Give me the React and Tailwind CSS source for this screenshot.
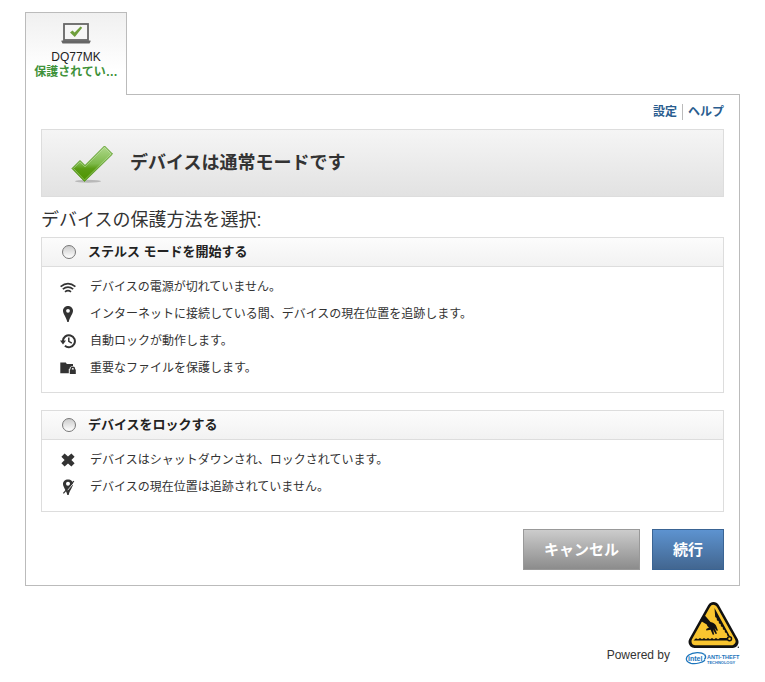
import React from 'react';

function CheckMark({ id }) {
  return (
    <>
      <defs>
        <linearGradient id={id} x1="0" y1="0" x2="0" y2="1">
          <stop offset="0" stopColor="#b0d98c" />
          <stop offset="0.5" stopColor="#7db94a" />
          <stop offset="0.64" stopColor="#5a9c14" />
          <stop offset="1" stopColor="#4c9400" />
        </linearGradient>
      </defs>
      <path d="M1 23.5 L9 15.5 L14 20.5 L33.5 1 L41.5 9 L13.5 36.5 Z" fill={`url(#${id})`} stroke="#5f9f2c" strokeWidth="1" />
      <path d="M2.6 23.5 L9 17 L14 22 L33.5 2.5 L40 9 L13.5 35 Z" fill="none" stroke="#d3ebbd" strokeWidth="0.8" opacity="0.5" />
    </>
  );
}

function LaptopIcon() {
  return (
    <svg width="30" height="21" viewBox="0 0 30 21" aria-hidden="true">
      <rect x="3" y="1" width="24" height="16" fill="#f6f6f6" stroke="#666" strokeWidth="1.8" />
      <path d="M0.5 17.5 H29.5 V18.5 L28.5 20.5 H1.5 L0.5 18.5 Z" fill="#666" />
      <path d="M9 9.5 L11.5 7.6 L13.6 9.4 L19.5 3.4 L21.2 4.8 L13.8 14 Z" fill="#6f9f3c" />
    </svg>
  );
}

function WifiIcon() {
  return (
    <svg width="16" height="16" viewBox="0 0 16 16" fill="none" stroke="#333" strokeWidth="1.7" aria-hidden="true">
      <path d="M0.6 7.6 Q8 1.6 15.4 7.6" />
      <path d="M2.8 10.2 Q8 6 13.2 10.2" />
      <path d="M5 12.8 Q8 10.4 11 12.8" />
    </svg>
  );
}

function PinIcon() {
  return (
    <svg width="16" height="16" viewBox="0 0 16 16" fill="#333" aria-hidden="true">
      <path fillRule="evenodd" d="M8 0 C5 0 3 2.2 3 4.8 C3 8 6.4 11.5 7.3 16 H8.7 C9.6 11.5 13 8 13 4.8 C13 2.2 11 0 8 0 Z M8 2.9 A1.9 1.9 0 1 1 8 6.7 A1.9 1.9 0 1 1 8 2.9 Z" />
    </svg>
  );
}

function HistoryIcon() {
  return (
    <svg width="16" height="16" viewBox="0 0 16 16" fill="none" stroke="#333" strokeWidth="2" aria-hidden="true">
      <path d="M2.9 8 A6 6 0 1 1 4.9 12.7" />
      <path d="M0 7.4 H6 L3 11.4 Z" fill="#333" stroke="none" />
      <path d="M8.8 4.4 V8.4 L11.8 10.2" strokeWidth="1.5" />
    </svg>
  );
}

function FolderLockIcon() {
  return (
    <svg width="16" height="16" viewBox="0 0 16 16" fill="#333" aria-hidden="true">
      <path d="M0.3 2.6 H5.8 L6.8 4 H13 V5.9 C10.8 5.9 9.5 7.2 9.5 9 H8.8 V13.2 H0.3 Z" />
      <path fillRule="evenodd" d="M9.8 9.5 H10.4 V9 A2.4 2.4 0 0 1 15.2 9 V9.5 H15.8 V14 H9.8 Z M11.8 9.5 H13.8 V9 A1 1 0 0 0 11.8 9 Z" />
    </svg>
  );
}

function CrossIcon() {
  return (
    <svg width="16" height="16" viewBox="0 0 16 16" fill="#333" aria-hidden="true">
      <path d="M4.6 1.4 L8 4.4 L11.4 1.4 L14.6 4.8 L11.4 8 L14.6 11.2 L11.4 14.4 L8 11.5 L4.6 14.4 L1.4 11.2 L4.6 8 L1.4 4.8 Z" />
    </svg>
  );
}

function PinOffIcon() {
  return (
    <svg width="16" height="16" viewBox="0 0 16 16" aria-hidden="true">
      <path fill="#333" fillRule="evenodd" d="M8 0.5 C5 0.5 3 2.6 3 5 C3 8 6.4 11.5 7.3 16 H8.7 C9.6 11.5 13 8 13 5 C13 2.6 11 0.5 8 0.5 Z M8 2.8 A2 2 0 1 1 8 6.8 A2 2 0 1 1 8 2.8 Z" />
      <path d="M7.6 11.2 L14.4 3.2" stroke="#fff" strokeWidth="0.9" />
      <path d="M3.4 14.4 L13.8 2.2" stroke="#333" strokeWidth="1.3" />
    </svg>
  );
}

function AntiTheftLogo() {
  return (
    <svg width="56" height="64" viewBox="0 0 56 64" role="img" aria-label="Intel Anti-Theft Technology">
      <path d="M29.5 7 L48.5 41 H10.5 Z" fill="#111" stroke="#111" strokeWidth="12" strokeLinejoin="round" />
      <path d="M29.5 8 L47.5 40.3 H11.5 Z" fill="#f9c52f" stroke="#f9c52f" strokeWidth="8" strokeLinejoin="round" />
      <path d="M20 13.5 L26.5 21 C29 21.5 31 22.5 32 24.5 L34 29.5 L32.6 29.8 L30.5 26.8 L33 32.5 L31.6 33 L29 28.5 L30.2 33.5 L28.8 33.8 L26.6 28.8 L22.3 29.5 L22.2 28 L25 26.4 C23.5 25.5 23 24.5 22.8 23.5 L16 19.5 Z" fill="#111" />
      <path d="M30.5 7 L46 35.5 L43.5 35 L42.5 32 L41 31.5 L40.6 29 L39 28.5 L38.6 26 L37 25.5 L36.6 23 L35 22.5 L34.6 20 L33 19.5 L32.6 17 L31.2 16 Z" fill="#111" />
      <path d="M9.5 39.6 L12 37.2 L14 38.2 L16 37 L18 38.2 L20 37 L22 38.2 L24 37 L26 38.2 L28 37 L30 38.2 L32 37 L34 38.2 L36 37 H43 V39.6 Z" fill="#111" />
      <circle cx="45.5" cy="37.8" r="2" fill="#f9c52f" stroke="#111" strokeWidth="1.5" />
      <circle cx="54.3" cy="46.3" r="0.7" fill="#111" />
      <path d="M20.5 53.5 C17.5 50.8 9 51 4.8 54 C1 56.8 1.5 61 7 62.3 C12 63.3 18.5 61.5 21 59.3" fill="none" stroke="#1c75bc" strokeWidth="1.2" />
      <path d="M20.5 53.5 C21.8 55 21.8 57 20.3 58.5" fill="none" stroke="#1c75bc" strokeWidth="1.4" />
      <text x="4" y="59.5" fontFamily="Liberation Sans, sans-serif" fontSize="7" fontWeight="bold" fill="#1c75bc">intel</text>
      <text x="23" y="58" fontFamily="Liberation Sans, sans-serif" fontSize="5.5" fontWeight="bold" fill="#1c75bc">ANTI-THEFT</text>
      <text x="23" y="63" fontFamily="Liberation Sans, sans-serif" fontSize="4" fontWeight="bold" fill="#1c75bc">TECHNOLOGY</text>
    </svg>
  );
}

export default function App() {
  const modes = [
    {
      id: 'stealth',
      title: 'ステルス モードを開始する',
      items: [
        { icon: WifiIcon, text: 'デバイスの電源が切れていません。' },
        { icon: PinIcon, text: 'インターネットに接続している間、デバイスの現在位置を追跡します。' },
        { icon: HistoryIcon, text: '自動ロックが動作します。' },
        { icon: FolderLockIcon, text: '重要なファイルを保護します。' }
      ]
    },
    {
      id: 'lock',
      title: 'デバイスをロックする',
      items: [
        { icon: CrossIcon, text: 'デバイスはシャットダウンされ、ロックされています。' },
        { icon: PinOffIcon, text: 'デバイスの現在位置は追跡されていません。' }
      ]
    }
  ];

  return (
    <div className="min-h-screen bg-white px-[25px] pt-3 font-['Liberation_Sans','Noto_Sans_CJK_JP',sans-serif] text-xs text-[#333]">
      {/* Device tab */}
      <button
        type="button"
        className="relative z-10 -mb-px flex h-[83px] w-[102px] flex-col items-center border border-b-0 border-[#bbb] bg-linear-to-b from-[#f0f0f0] to-white to-70% pt-2.5"
      >
        <LaptopIcon />
        <span className="mt-1.5 leading-[15px] text-[#222]">DQ77MK</span>
        <span className="font-bold leading-[15px] text-[#3f923a]">保護されてい…</span>
      </button>

      <main className="border border-[#bbb] bg-white p-[15px] pt-[9px]">
        <nav className="flex justify-end font-bold leading-4 text-[#2a5d8f]">
          <a href="#settings" className="border-r border-[#bbb] pr-[5px]">設定</a>
          <a href="#help" className="pl-[5px]">ヘルプ</a>
        </nav>

        {/* Status banner */}
        <div className="mt-[9px] flex h-[68px] items-center border border-[#ddd] bg-linear-to-b from-[#f5f5f5] to-[#e2e2e2] pl-[29px]">
          <svg width="44" height="40" viewBox="0 -2 44 40" aria-hidden="true">
            <ellipse cx="17" cy="36.3" rx="13" ry="1.5" fill="#000" opacity="0.2" />
            <CheckMark id="check-large" />
          </svg>
          <h1 className="ml-[15px] text-lg font-bold leading-6">デバイスは通常モードです</h1>
        </div>

        <form>
          <fieldset>
            <legend className="pt-2.5 pb-1 text-lg leading-[26px]">デバイスの保護方法を選択:</legend>
            <div className="flex flex-col gap-[17px]">
              {modes.map((mode) => (
                <section key={mode.id} className="border border-[#ddd]">
                  <div className="flex h-[29px] items-center border-b border-[#ddd] bg-linear-to-b from-[#fcfcfc] to-[#f2f2f2] pl-5">
                    <input
                      type="radio"
                      id={mode.id}
                      name="mode"
                      className="size-[14px] appearance-none rounded-full border border-[#777] bg-linear-to-b from-[#ccc] to-white checked:border-4"
                    />
                    <label htmlFor={mode.id} className="ml-3 text-[13px] font-bold leading-5 text-[#222]">
                      {mode.title}
                    </label>
                  </div>
                  <ul className="pt-1.5 pb-[11px]">
                    {mode.items.map((item) => (
                      <li key={item.text} className="flex h-[27px] items-center gap-3.5 pl-[18px]">
                        <item.icon />
                        <span>{item.text}</span>
                      </li>
                    ))}
                  </ul>
                </section>
              ))}
            </div>
          </fieldset>

          <div className="mt-[17px] flex justify-end gap-3 text-[15px] font-bold text-white">
            <button type="button" className="h-[41px] border border-[#999] bg-linear-to-b from-[#ccc] to-[#8c8c8c] px-5">
              キャンセル
            </button>
            <button type="submit" className="h-[41px] border border-[#3a6494] bg-linear-to-b from-[#5d93d0] to-[#426690] px-5">
              続行
            </button>
          </div>
        </form>
      </main>

      <footer className="flex items-end justify-end gap-3.5 pt-[15px]">
        <span className="leading-5">Powered by</span>
        <AntiTheftLogo />
      </footer>
    </div>
  );
}
